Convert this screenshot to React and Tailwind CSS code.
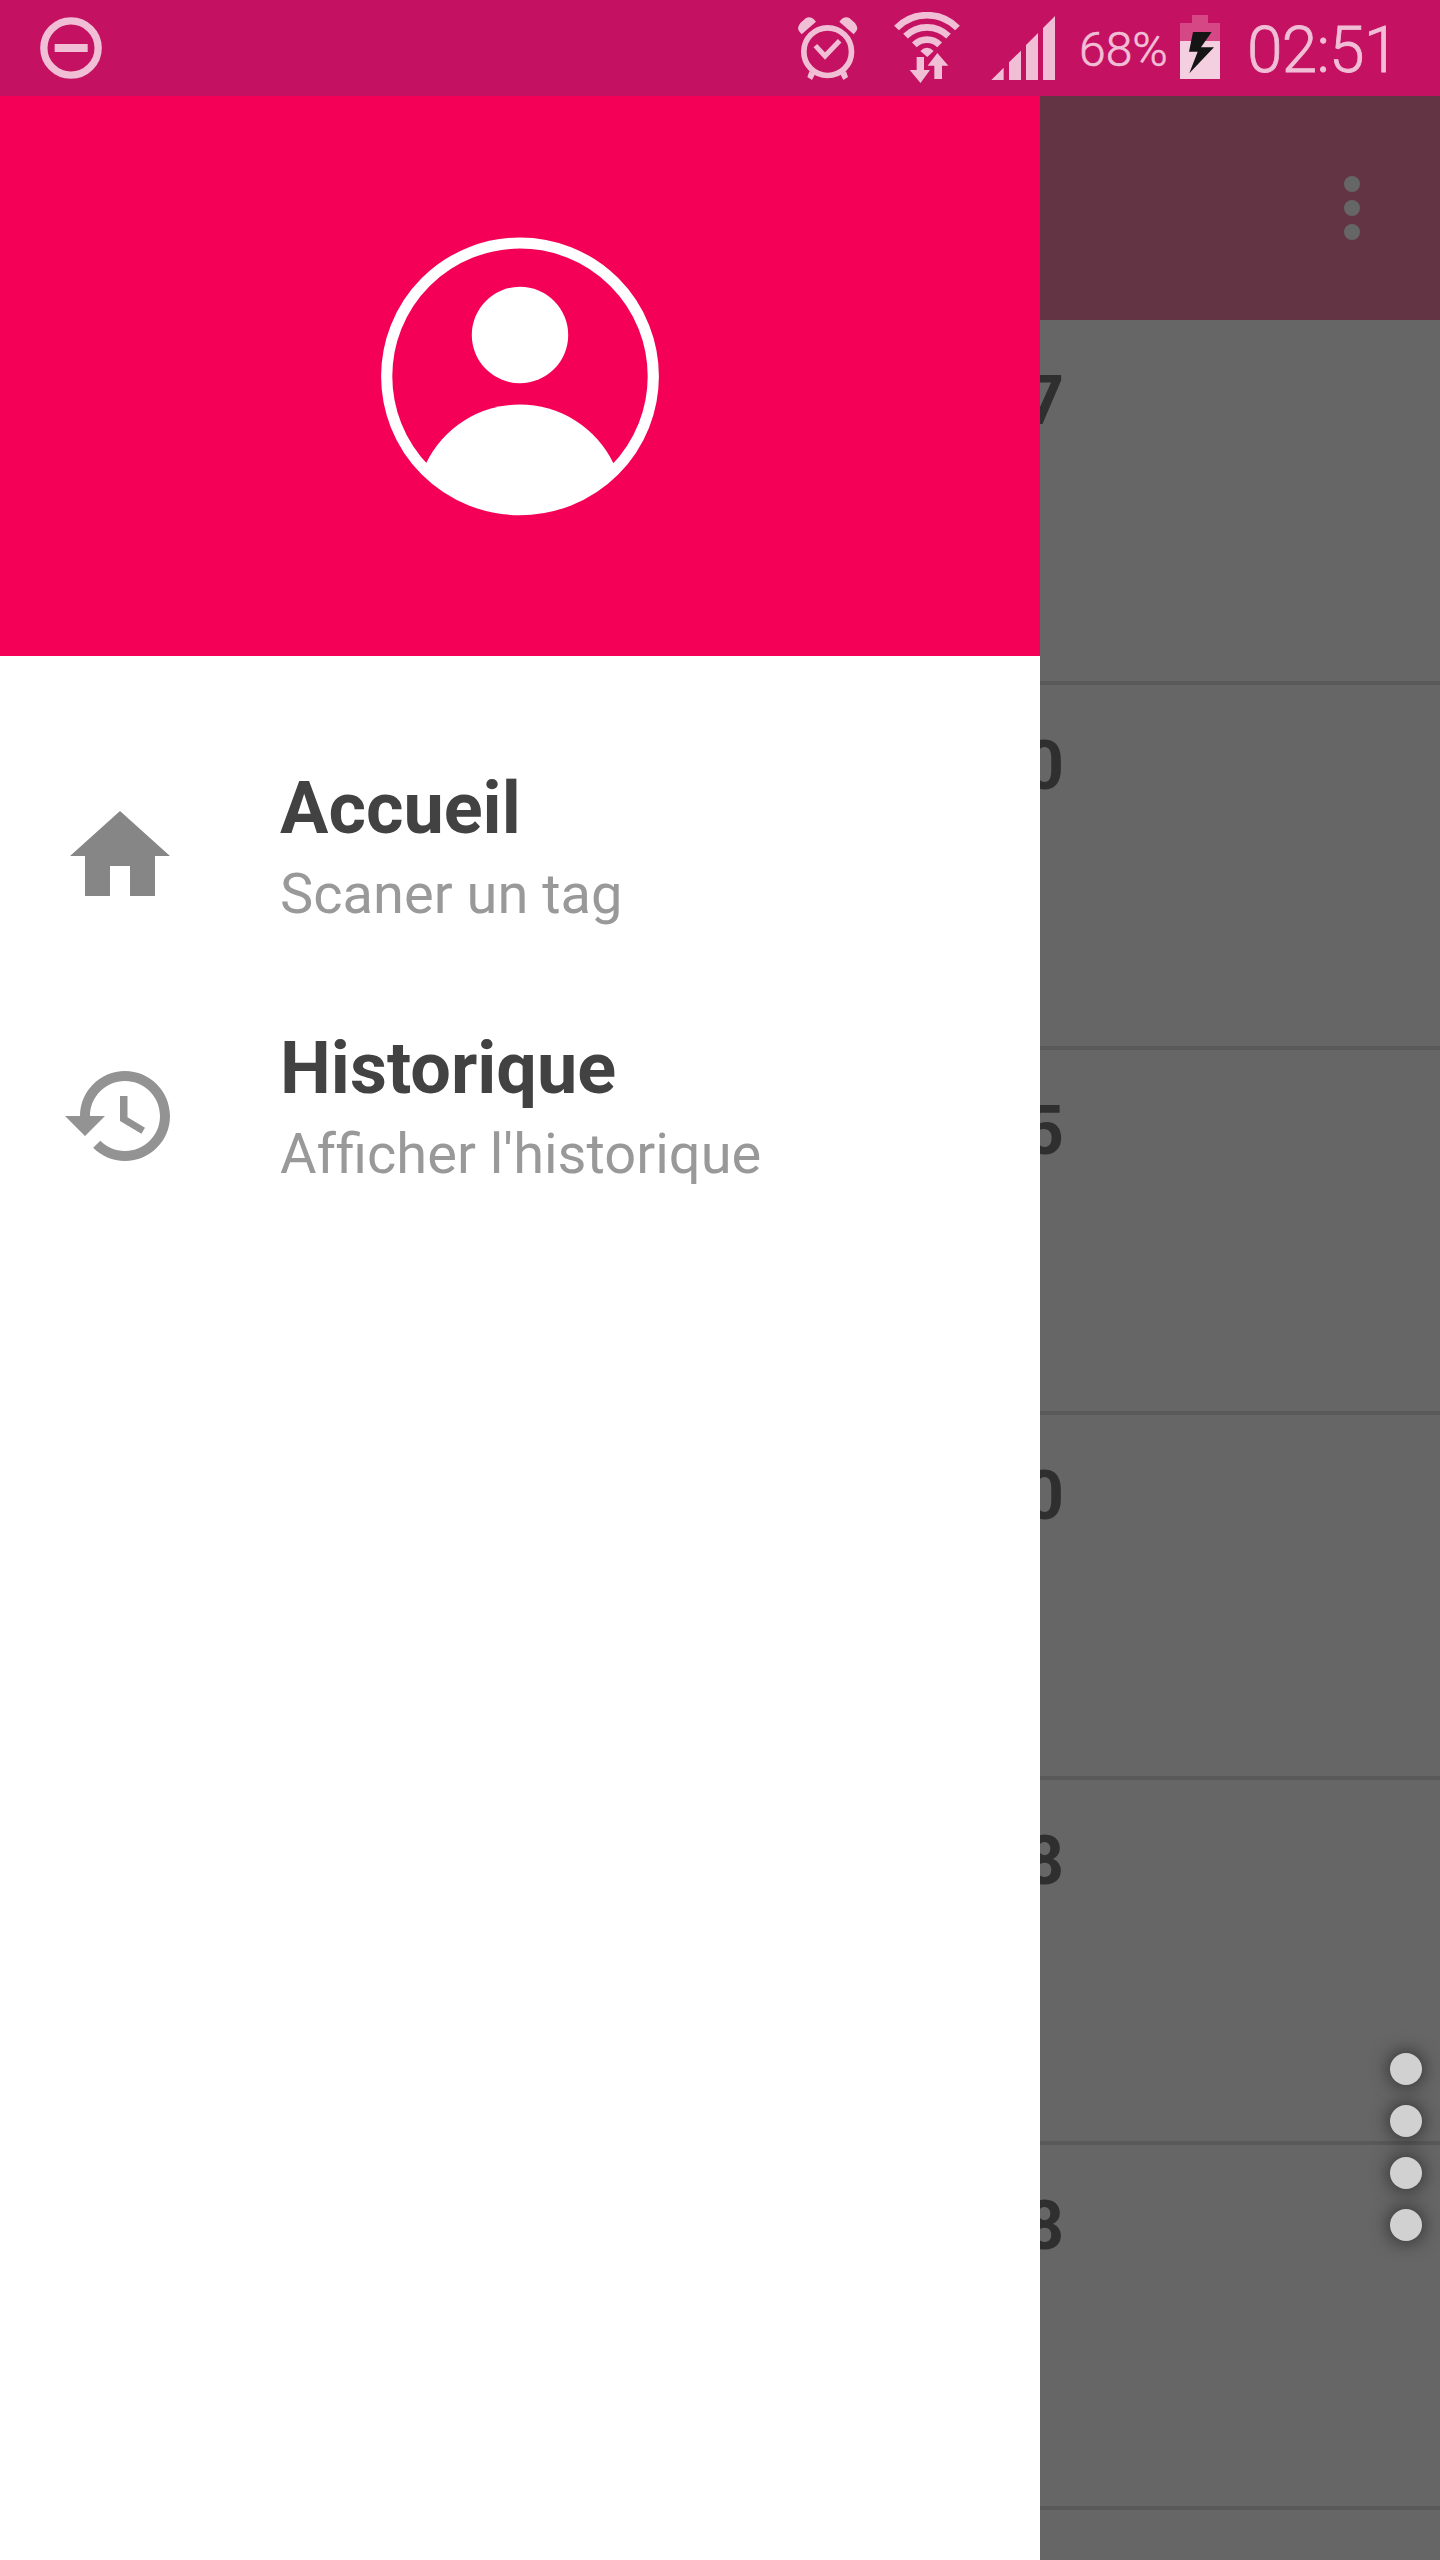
import React from "react";

const rows = ["7", "0", "5", "0", "8", "8"];

function DoNotDisturbIcon() {
  return (
    <svg viewBox="120 51 186 186" className="h-[62px] w-[62px] shrink-0">
      <circle cx="213" cy="144" r="81.5" fill="none" stroke="#f0bfd6" strokeWidth="22" />
      <rect x="164" y="132" width="99" height="24" fill="#f0bfd6" />
    </svg>
  );
}

function AlarmIcon() {
  return (
    <svg viewBox="54 48 180 192" className="h-16 w-[60px] shrink-0" fill="#f0bfd6">
      <circle cx="143" cy="155" r="71.5" fill="none" stroke="#f0bfd6" strokeWidth="17" />
      <path d="M106 137L135 168L179 122" fill="none" stroke="#f0bfd6" strokeWidth="15" />
      <path d="M65 103L108 65Q94 47 78 54L61 69Q50 84 57 93Z" />
      <path d="M221 103L178 65Q192 47 208 54L225 69Q236 84 229 93Z" />
      <path d="M88 214L105 223L96 240L82 231ZM198 214L181 223L190 240L204 231Z" />
    </svg>
  );
}

function WifiIcon() {
  return (
    <svg viewBox="342 36 198 213" className="h-[71px] w-[66px] shrink-0" fill="#f0bfd6">
      <g fill="none" stroke="#f0bfd6" strokeWidth="20">
        <path d="M349.5 84A128 128 0 0 1 532.5 84" />
        <path d="M376.5 108.5A92 92 0 0 1 505.5 108.5" />
        <path d="M403 134.5A54 54 0 0 1 479 134.5" />
      </g>
      <path d="M421 153Q441 134 461 153L442 171Z" />
      <path d="M410 171h22v39h18l-28.5 39l-32.5 -39h21ZM463 237h23v-40h19l-33 -38l-29 38h20Z" />
    </svg>
  );
}

function SignalIcon() {
  return (
    <svg viewBox="633 48 192 192" className="h-16 w-16 shrink-0" fill="#f0bfd6">
      <path d="M634 240L671 203V240ZM687 240V187L723 152V240ZM738 240V135L774 99V240ZM789 240V84L825 48V240Z" />
    </svg>
  );
}

function BatteryIcon() {
  return (
    <svg viewBox="360 45 120 192" className="h-16 w-10 shrink-0">
      <path d="M396 45h48v24h36v54H360V69h36Z" fill="#d54885" />
      <rect x="360" y="123" width="120" height="114" fill="#f4cfe0" />
      <path d="M399 96H455L423 142H462L388 220L413 155H387Z" fill="#151515" />
    </svg>
  );
}

function StatusBar() {
  return (
    <header className="flex h-24 shrink-0 items-start bg-[#c51162] pl-10 font-light text-[#f0bfd6]">
      <div className="mt-[17px]"><DoNotDisturbIcon /></div>
      <div className="mt-4 ml-[696px]"><AlarmIcon /></div>
      <div className="mt-3 ml-9"><WifiIcon /></div>
      <div className="mt-4 ml-[31px]"><SignalIcon /></div>
      <span className="mt-[18px] ml-6 w-[101px] text-[48px] leading-[64px] whitespace-nowrap [-webkit-text-stroke:0.6px_#f0bfd6]">68%</span>
      <div className="mt-[15px]"><BatteryIcon /></div>
      <span className="mt-[11px] ml-[27px] text-[64px] leading-[80px] tracking-[-0.8px] whitespace-nowrap [-webkit-text-stroke:0.8px_#f0bfd6]">02:51</span>
    </header>
  );
}

function Avatar() {
  return (
    <svg viewBox="0 0 280 280" className="h-[280px] w-[280px]" fill="#fff">
      <circle cx="140" cy="140.3" r="133.3" fill="none" stroke="#fff" strokeWidth="11.2" />
      <circle cx="140" cy="99" r="48.2" />
      <path d="M46 227.5A104 104 0 0 1 233.5 227.5L236 236.5A138.9 138.9 0 0 1 44 236.5Z" />
    </svg>
  );
}

function DrawerItem({ title, subtitle, color, path }) {
  return (
    <li className="flex h-[260px] items-center pl-[60px]">
      <svg viewBox="0 0 24 24" className="h-[120px] w-[120px] shrink-0" fill={color}>
        <path d={path} />
      </svg>
      <div className="ml-[100px] flex flex-col gap-[7px] pb-[11px] whitespace-nowrap">
        <div className="text-[72px] leading-[80px] font-bold text-[#424242]">{title}</div>
        <div className="text-[56px] leading-[76px] text-[#999999]">{subtitle}</div>
      </div>
    </li>
  );
}

function Drawer() {
  return (
    <nav className="flex w-[1040px] shrink-0 flex-col bg-white">
      <div className="flex h-[560px] items-center justify-center bg-[#f50057]">
        <Avatar />
      </div>
      <ul className="pt-[70px]">
        <DrawerItem
          title="Accueil"
          subtitle="Scaner un tag"
          color="#868686"
          path="M10 20v-6h4v6h5v-8h3L12 3 2 12h3v8z"
        />
        <DrawerItem
          title="Historique"
          subtitle={<><span className="inline-block">Af</span>ficher l'historique</>}
          color="#939393"
          path="M13 3c-4.97 0-9 4.03-9 9H1l3.89 3.89.07.14L9 12H6c0-3.87 3.13-7 7-7s7 3.13 7 7-3.13 7-7 7c-1.93 0-3.68-.79-4.94-2.06l-1.42 1.42C8.27 19.99 10.51 21 13 21c4.97 0 9-4.03 9-9s-4.03-9-9-9zm-1 5v5l4.28 2.54.72-1.21-3.5-2.08V8H12z"
        />
      </ul>
    </nav>
  );
}

function ContentBehind() {
  return (
    <main className="flex min-w-0 flex-1 flex-col overflow-hidden bg-[#666666]">
      <div className="flex h-56 shrink-0 flex-col items-end justify-center gap-2 bg-[#633443] pr-20">
        <span className="h-4 w-4 rounded-full bg-[#666666]" />
        <span className="h-4 w-4 rounded-full bg-[#666666]" />
        <span className="h-4 w-4 rounded-full bg-[#666666]" />
      </div>
      {rows.map((digit, i) => (
        <div key={i} className="h-[365px] shrink-0 border-b-4 border-[#595959] pt-[41px]">
          <span className="-ml-[15px] block text-[68px] leading-[80px] font-bold text-[#2f2f2f]">{digit}</span>
        </div>
      ))}
    </main>
  );
}

function EdgeHandle() {
  return (
    <div className="absolute top-[2053px] right-[18px] flex flex-col gap-5">
      {[0, 1, 2, 3].map((i) => (
        <span key={i} className="h-8 w-8 rounded-full bg-[#d1d1d1] shadow-[0_0_18px_2px_rgba(0,0,0,0.5)]" />
      ))}
    </div>
  );
}

export default function App() {
  return (
    <div className="relative flex h-[2560px] w-[1440px] flex-col overflow-hidden bg-white font-[Roboto,sans-serif]">
      <StatusBar />
      <div className="flex min-h-0 flex-1">
        <Drawer />
        <ContentBehind />
      </div>
      <EdgeHandle />
    </div>
  );
}
